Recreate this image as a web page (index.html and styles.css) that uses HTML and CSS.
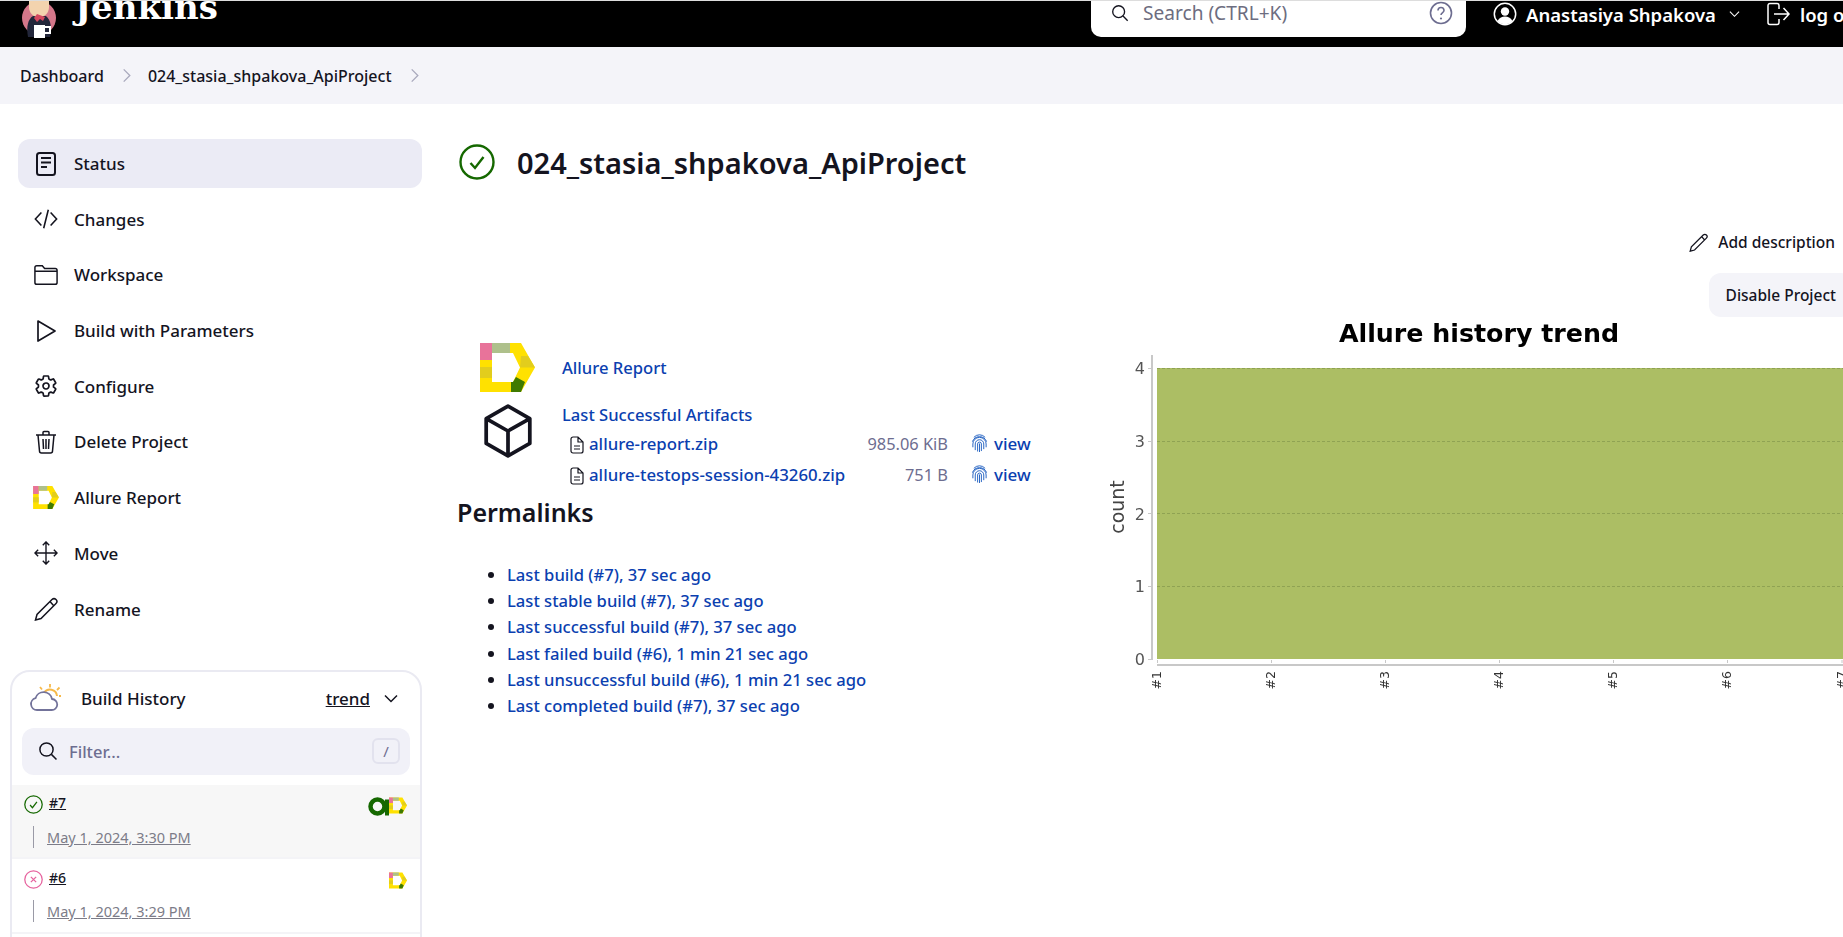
FILE: index.html
```html
<!DOCTYPE html>
<html lang="en">
<head>
    <meta charset="UTF-8">
    <meta name="viewport" content="width=device-width, initial-scale=1.0">
    <title>024_stasia_shpakova_ApiProject - Jenkins</title>
    <link rel="stylesheet" href="styles.css">
</head>

<body>
    <!-- shared icons -->
    <svg class="sprites" width="0" height="0">
        <symbol id="allure" viewBox="0 0 55 49">
            <path fill="#ffe100" d="M0 0H41L55 24.5L41 49H0ZM12 10V39H33L40 24.5L33 10Z" fill-rule="evenodd"/>
            <path fill="#e8739a" d="M0 0H12V17H0Z"/>
            <path fill="#aec08b" d="M12 0H30V10H12Z"/>
            <path fill="#e2cd1d" d="M0 24H12V35H0Z"/>
            <path fill="#e2cd1d" d="M41 13L48 13L55 24.5H40Z"/>
            <path fill="#3f7a00" d="M31 39H33L36 34L45 39L41 49H31Z"/>
        </symbol>
        <symbol id="check-circle" viewBox="0 0 36 36">
            <circle cx="18" cy="18" r="16.5" fill="none" stroke="currentColor" stroke-width="2.4"/>
            <path d="M11.5 19l4.5 5 8.5-11" fill="none" stroke="currentColor" stroke-width="2.4"/>
        </symbol>
        <symbol id="search" viewBox="0 0 20 20">
            <circle cx="8.5" cy="8.5" r="6.6" fill="none" stroke="currentColor" stroke-width="1.5"/>
            <path d="M13.4 13.4L18.5 18.5" stroke="currentColor" stroke-width="1.5"/>
        </symbol>
        <symbol id="doc" viewBox="0 0 14 18">
            <path d="M1 3a2 2 0 012-2h5l5 5v9a2 2 0 01-2 2H3a2 2 0 01-2-2Z M8 1v5h5 M4 10h6 M4 13h6" fill="none" stroke="currentColor" stroke-width="1.2"/>
        </symbol>
        <symbol id="fingerprint" viewBox="0 0 18 20">
            <g fill="none" stroke="#1f5fc0" stroke-width="1">
                <path d="M3 3.5a8 8 0 0112 0"/>
                <path d="M1.5 8a8 8 0 0115 0"/>
                <path d="M2 14V10.5a7 7 0 0114 0V14"/>
                <path d="M4.5 17V10.5a4.5 4.5 0 019 0V16"/>
                <path d="M7 18.5V10.5a2 2 0 014 0V18"/>
                <path d="M9 10v9"/>
            </g>
        </symbol>
    </svg>

    <div class="page">
        <header class="topbar">
            <a class="brand">
                <svg class="butler" viewBox="0 0 36 37">
                    <circle cx="17" cy="17" r="17" fill="#d5778a"/>
                    <path d="M6 36c-2-10 0-18 5-21h13c5 4 6 12 4 21Z" fill="#22263a"/>
                    <path d="M7 0h20v6c0 6-4 10-10 10S7 12 7 6Z" fill="#f3d3ae"/>
                    <path d="M15 13l8 3-2 4-3-2-3 3-3-4Z" fill="#d5485f"/>
                    <path d="M12 24h11v13H12Z" fill="#fff"/>
                    <path d="M23 26h5v6h-5" fill="none" stroke="#fff" stroke-width="2"/>
                </svg>
                <span class="brand-name">Jenkins</span>
            </a>
            <div class="search-box">
                <svg class="search-icon"><use href="#search"/></svg>
                <span class="search-text">Search (CTRL+K)</span>
                <svg class="help-icon" viewBox="0 0 24 24">
                    <circle cx="12" cy="12" r="10.5" fill="none" stroke="#6d6d90" stroke-width="1.6"/>
                    <path d="M9 9.5a3 3 0 116 0c0 2-3 2.2-3 4.5" fill="none" stroke="#6d6d90" stroke-width="1.6"/>
                    <circle cx="12" cy="17.5" r="1.1" fill="#6d6d90"/>
                </svg>
            </div>
            <div class="user">
                <svg class="user-icon" viewBox="0 0 24 24">
                    <circle cx="12" cy="12" r="10.7" fill="none" stroke="#fff" stroke-width="1.5"/>
                    <circle cx="12" cy="9.5" r="4.2" fill="#fff"/>
                    <path d="M4.5 19c2-3.5 4.5-4.5 7.5-4.5s5.5 1 7.500 4.5a10.5 10.5 0 01-15 0Z" fill="#fff"/>
                </svg>
                <span class="user-name">Anastasiya Shpakova</span>
                <svg class="user-caret" viewBox="0 0 12 8"><path d="M1 1.5l5 5 5-5" fill="none" stroke="#fff" stroke-width="1.2"/></svg>
            </div>
            <a class="logout">
                <svg class="logout-icon" viewBox="0 0 24 24">
                    <path d="M13 7V3.5a2 2 0 00-2-2H4a2 2 0 00-2 2v17a2 2 0 002 2h7a2 2 0 002-2V17" fill="none" stroke="#fff" stroke-width="1.5"/>
                    <path d="M8 12h15M17.5 6l5.5 6-5.5 6" fill="none" stroke="#fff" stroke-width="1.5"/>
                </svg>
                <span>log out</span>
            </a>
        </header>

        <nav class="breadcrumbs">
            <a>Dashboard</a>
            <svg class="crumb-sep" viewBox="0 0 10 16"><path d="M1.5 1.5L8 8l-6.5 6.5" fill="none" stroke="#a9a9bd" stroke-width="1.4"/></svg>
            <a>024_stasia_shpakova_ApiProject</a>
            <svg class="crumb-sep" viewBox="0 0 10 16"><path d="M1.5 1.5L8 8l-6.5 6.5" fill="none" stroke="#a9a9bd" stroke-width="1.4"/></svg>
        </nav>

        <div class="layout">
            <aside class="sidebar">
                <ul class="tasks">
                    <li class="task active">
                        <svg class="task-icon" viewBox="0 0 24 24"><rect x="3" y="1" width="18" height="22" rx="2.5" fill="none" stroke="currentColor" stroke-width="2"/><path d="M7 6h10M7 10.5h10M7 15h6" stroke="currentColor" stroke-width="2"/></svg>
                        Status
                    </li>
                    <li class="task">
                        <svg class="task-icon" viewBox="0 0 26 24"><path d="M8 5L1.5 12 8 19M18 5l6.5 7-6.5 7M15.5 2l-5 20" fill="none" stroke="currentColor" stroke-width="1.7"/></svg>
                        Changes
                    </li>
                    <li class="task">
                        <svg class="task-icon" viewBox="0 0 26 24"><path d="M1 6V4a2 2 0 012-2h6l2.5 3H23a2 2 0 012 2v13a2 2 0 01-2 2H3a2 2 0 01-2-2ZM1 8h24" fill="none" stroke="currentColor" stroke-width="1.6"/></svg>
                        Workspace
                    </li>
                    <li class="task">
                        <svg class="task-icon" viewBox="0 0 24 24"><path d="M4 2l17 10L4 22Z" fill="none" stroke="currentColor" stroke-width="1.7" stroke-linejoin="round"/></svg>
                        Build with Parameters
                    </li>
                    <li class="task">
                        <svg class="task-icon" viewBox="0 0 512 512"><path d="M262.29 192.31a64 64 0 1057.4 57.4 64.13 64.13 0 00-57.4-57.4zM416.39 256a154.34 154.34 0 01-1.53 20.79l45.21 35.46a10.81 10.81 0 012.45 13.75l-42.77 74a10.81 10.81 0 01-13.14 4.59l-44.9-18.08a16.11 16.11 0 00-15.17 1.75A164.48 164.48 0 01325 400.8a15.94 15.94 0 00-8.82 12.14l-6.73 47.89a11.08 11.08 0 01-10.68 9.17h-85.54a11.11 11.11 0 01-10.69-8.87l-6.72-47.82a16.07 16.07 0 00-9-12.22 155.3 155.3 0 01-21.46-12.57 16 16 0 00-15.11-1.71l-44.89 18.07a10.81 10.81 0 01-13.14-4.58l-42.77-74a10.8 10.8 0 012.45-13.75l38.21-30a16.05 16.05 0 006-14.08c-.36-4.17-.58-8.33-.58-12.5s.21-8.27.58-12.35a16 16 0 00-6.07-13.94l-38.19-30A10.81 10.81 0 0149.48 186l42.77-74a10.81 10.81 0 0113.14-4.59l44.9 18.08a16.11 16.11 0 0015.17-1.75A164.48 164.48 0 01187 111.2a15.94 15.94 0 008.82-12.14l6.73-47.89A11.08 11.08 0 01213.23 42h85.54a11.11 11.11 0 0110.69 8.87l6.72 47.82a16.07 16.07 0 009 12.22 155.3 155.3 0 0121.46 12.57 16 16 0 0015.11 1.71l44.89-18.07a10.81 10.81 0 0113.14 4.58l42.77 74a10.8 10.8 0 01-2.45 13.75l-38.21 30a16.05 16.05 0 00-6.05 14.08c.33 4.14.55 8.3.55 12.47z" fill="none" stroke="currentColor" stroke-width="36"/></svg>
                        Configure
                    </li>
                    <li class="task">
                        <svg class="task-icon" viewBox="0 0 24 24"><path d="M2 5h20M4 5l1.5 16a2 2 0 002 2h9a2 2 0 002-2L20 5M9 5V2.5a1 1 0 011-1h4a1 1 0 011 1V5M9 9l.5 10M12 9v10M15 9l-.5 10" fill="none" stroke="currentColor" stroke-width="1.5"/></svg>
                        Delete Project
                    </li>
                    <li class="task">
                        <svg class="task-icon allure-task"><use href="#allure"/></svg>
                        Allure Report
                    </li>
                    <li class="task">
                        <svg class="task-icon" viewBox="0 0 26 26"><path d="M13 1v24M1 13h24M9.5 4.5L13 1l3.5 3.5M9.5 21.5L13 25l3.5-3.5M4.5 9.5L1 13l3.5 3.5M21.5 9.5L25 13l-3.5 3.5" fill="none" stroke="currentColor" stroke-width="1.5"/></svg>
                        Move
                    </li>
                    <li class="task">
                        <svg class="task-icon" viewBox="0 0 24 24"><path d="M18 2.5a2.8 2.8 0 014 4L7 21.5 1.5 23 3 17.5ZM16 4.5l3.5 4" fill="none" stroke="currentColor" stroke-width="1.5"/></svg>
                        Rename
                    </li>
                </ul>

                <section class="history">
                    <div class="history-head">
                        <svg class="weather" viewBox="0 0 32 28">
                            <path d="M21 3.5V0M28 6l2.5-2.5M30 12h3M13 5.5L11 3" stroke="#f6b94a" stroke-width="1.8"/>
                            <path d="M15 9a7 7 0 0113 3" fill="none" stroke="#f6b94a" stroke-width="2"/>
                            <path d="M8 26a6 6 0 01-1.5-11.8A8.5 8.5 0 0123 15a5.5 5.5 0 01-.5 11Z" fill="#fff" stroke="#73739a" stroke-width="1.8"/>
                        </svg>
                        <span class="history-title">Build History</span>
                        <a class="trend">trend</a>
                        <svg class="trend-caret" viewBox="0 0 14 9"><path d="M1 1.5l6 6 6-6" fill="none" stroke="#14141f" stroke-width="1.5"/></svg>
                    </div>
                    <div class="filter">
                        <svg class="filter-icon"><use href="#search"/></svg>
                        <span class="filter-text">Filter...</span>
                        <kbd class="filter-key">/</kbd>
                    </div>
                    <div class="build current">
                        <div class="build-top">
                            <svg class="build-status ok"><use href="#check-circle"/></svg>
                            <a class="build-no">#7</a>
                            <span class="build-badges">
                                <svg class="badge-testops" viewBox="0 0 21 19"><circle cx="9.5" cy="9.5" r="7" fill="none" stroke="#156800" stroke-width="4.5"/><path d="M19 2.5v16" stroke="#156800" stroke-width="4"/></svg>
                                <svg class="badge-allure"><use href="#allure"/></svg>
                            </span>
                        </div>
                        <div class="build-time"><a>May 1, 2024, 3:30 PM</a></div>
                    </div>
                    <div class="build">
                        <div class="build-top">
                            <svg class="build-status fail" viewBox="0 0 36 36"><circle cx="18" cy="18" r="16.5" fill="none" stroke="currentColor" stroke-width="2.4"/><path d="M13 13l10 10M23 13L13 23" stroke="currentColor" stroke-width="2.4"/></svg>
                            <a class="build-no">#6</a>
                            <span class="build-badges">
                                <svg class="badge-allure"><use href="#allure"/></svg>
                            </span>
                        </div>
                        <div class="build-time"><a>May 1, 2024, 3:29 PM</a></div>
                    </div>
                    <div class="build"></div>
                </section>
            </aside>

            <main class="content">
                <div class="job-title">
                    <svg class="job-status"><use href="#check-circle"/></svg>
                    <h1>024_stasia_shpakova_ApiProject</h1>
                </div>

                <div class="actions">
                    <a class="add-description">
                        <svg class="add-icon" viewBox="0 0 24 24"><path d="M18 2.5a2.8 2.8 0 014 4L7 21.5 1.5 23 3 17.5ZM16 4.5l3.5 4" fill="none" stroke="currentColor" stroke-width="1.6"/></svg>
                        Add description
                    </a>
                    <button class="disable-btn" type="button">Disable Project</button>
                </div>

                <div class="columns">
                    <div class="links">
                        <div class="link-row report-row">
                            <svg class="big-allure"><use href="#allure"/></svg>
                            <a class="link">Allure Report</a>
                        </div>
                        <div class="link-row artifacts-row">
                            <svg class="box-icon" viewBox="0 0 50 52"><path d="M25 2l21 12v24L25 50 4 38V14ZM4 14l21 12 21-12M25 26v24" fill="none" stroke="#14141f" stroke-width="3.6" stroke-linejoin="round"/></svg>
                            <div class="artifacts">
                                <a class="link">Last Successful Artifacts</a>
                                <div class="file-row">
                                    <svg class="doc-icon"><use href="#doc"/></svg>
                                    <a class="link file-name">allure-report.zip</a>
                                    <span class="file-size">985.06 KiB</span>
                                    <svg class="view-icon"><use href="#fingerprint"/></svg>
                                    <a class="link view-link">view</a>
                                </div>
                                <div class="file-row">
                                    <svg class="doc-icon"><use href="#doc"/></svg>
                                    <a class="link file-name">allure-testops-session-43260.zip</a>
                                    <span class="file-size">751 B</span>
                                    <svg class="view-icon"><use href="#fingerprint"/></svg>
                                    <a class="link view-link">view</a>
                                </div>
                            </div>
                        </div>

                        <h2>Permalinks</h2>
                        <ul class="permalinks">
                            <li><a class="link">Last build (#7), 37 sec ago</a></li>
                            <li><a class="link">Last stable build (#7), 37 sec ago</a></li>
                            <li><a class="link">Last successful build (#7), 37 sec ago</a></li>
                            <li><a class="link">Last failed build (#6), 1 min 21 sec ago</a></li>
                            <li><a class="link">Last unsuccessful build (#6), 1 min 21 sec ago</a></li>
                            <li><a class="link">Last completed build (#7), 37 sec ago</a></li>
                        </ul>
                    </div>

                    <svg class="trend-chart" width="760" height="400" viewBox="0 0 760 400">
                        <text class="chart-title" x="379" y="22" text-anchor="middle">Allure history trend</text>
                        <rect x="57" y="48" width="686" height="291" fill="#acbe64"/>
                        <g stroke="#8fa253" stroke-dasharray="3 2">
                            <line x1="57" x2="743" y1="48.5" y2="48.5"/>
                            <line x1="57" x2="743" y1="121.5" y2="121.5"/>
                            <line x1="57" x2="743" y1="193.5" y2="193.5"/>
                            <line x1="57" x2="743" y1="266.5" y2="266.5"/>
                        </g>
                        <g stroke="#c8c8c8" stroke-width="2">
                            <line x1="52" x2="52" y1="35" y2="340"/>
                            <line x1="57" x2="743" y1="345" y2="345"/>
                        </g>
                        <g stroke="#c8c8c8">
                            <path d="M48 48.5h3M48 121.5h3M48 193.5h3M48 266.5h3M48 339.5h3"/>
                            <path d="M57.5 343v-3M171.5 343v-3M285.5 343v-3M399.5 343v-3M513.5 343v-3M627.5 343v-3M742 343v-3"/>
                        </g>
                        <g class="chart-tick" text-anchor="end">
                            <text x="45" y="54">4</text>
                            <text x="45" y="127">3</text>
                            <text x="45" y="200">2</text>
                            <text x="45" y="272">1</text>
                            <text x="45" y="345">0</text>
                        </g>
                        <text class="chart-axis" transform="translate(24 187) rotate(-90)" text-anchor="middle">count</text>
                        <g class="chart-build" text-anchor="end">
                            <text transform="translate(61 351) rotate(-90)">#1</text>
                            <text transform="translate(175 351) rotate(-90)">#2</text>
                            <text transform="translate(289 351) rotate(-90)">#3</text>
                            <text transform="translate(403 351) rotate(-90)">#4</text>
                            <text transform="translate(517 351) rotate(-90)">#5</text>
                            <text transform="translate(631 351) rotate(-90)">#6</text>
                            <text transform="translate(746 351) rotate(-90)">#7</text>
                        </g>
                    </svg>
                </div>
            </main>
        </div>
    </div>
</body>
</html>
```

FILE: styles.css
```css
* {
    margin: 0;
    padding: 0;
    box-sizing: border-box;
}

html,
body {
    height: 100%;
    overflow: hidden;
    background-color: #fff;
}

body {
    font-family: 'Noto Sans', 'Open Sans', sans-serif;
    font-size: 16px;
    color: #14141f;
}

.sprites {
    display: block;
    height: 0;
}

.page {
    width: 1862px;
}

/* top bar, cut off by the page scroll */
.topbar {
    display: flex;
    height: 47px;
    background-color: #000;
    border-top: 1px solid #ddd;
    color: #fff;
    overflow: hidden;
}

.brand {
    display: flex;
    width: 1091px;
    flex-shrink: 0;
    padding-left: 22px;
}

.butler {
    width: 36px;
    height: 37px;
}

.brand-name {
    margin-left: 17px;
    margin-top: -15px;
    font-family: 'DejaVu Serif', serif;
    font-size: 34px;
    line-height: 42px;
    font-weight: bold;
}

.search-box {
    display: flex;
    align-items: center;
    width: 375px;
    height: 36px;
    flex-shrink: 0;
    padding: 0 13px 12px 20px;
    background-color: #fff;
    border-radius: 0 0 10px 10px;
    color: #14141f;
}

.search-icon {
    width: 18px;
    height: 18px;
}

.search-text {
    margin-left: 14px;
    font-size: 19.1px;
    color: #6d6d80;
}

.help-icon {
    width: 24px;
    height: 24px;
    margin-left: auto;
}

.user {
    display: flex;
    align-items: center;
    flex-shrink: 0;
    height: 26px;
    margin-left: 27px;
}

.user-icon {
    width: 24px;
    height: 24px;
}

.user-name {
    margin-left: 9px;
    font-size: 18.5px;
    font-weight: 600;
    white-space: nowrap;
}

.user-caret {
    width: 11px;
    height: 8px;
    margin-left: 13px;
}

.logout {
    display: flex;
    align-items: center;
    flex-shrink: 0;
    height: 26px;
    margin-left: 26px;
    font-size: 18.5px;
    font-weight: 600;
    white-space: nowrap;
}

.logout-icon {
    width: 24px;
    height: 24px;
    margin-right: 10px;
}

/* breadcrumb */
.breadcrumbs {
    display: flex;
    align-items: center;
    height: 57px;
    padding-left: 20px;
    background-color: #f4f4f9;
    font-size: 16px;
    font-weight: 500;
}

.crumb-sep {
    width: 10px;
    height: 15px;
    margin: 0 16px 0 18px;
}

.layout {
    display: grid;
    grid-template-columns: 457px 1405px;
}

/* side panel */
.sidebar {
    padding: 35px 0 0 10px;
}

.tasks {
    display: flex;
    flex-direction: column;
    gap: 6.7px;
    margin-left: 8px;
    width: 404px;
    list-style: none;
}

.task {
    display: flex;
    align-items: center;
    height: 49px;
    padding-left: 16px;
    border-radius: 12px;
    font-size: 17px;
    font-weight: 500;
}

.task.active {
    background-color: #ebebf5;
}

.task-icon {
    width: 24px;
    height: 24px;
    margin-right: 16px;
    color: #14141f;
}

.allure-task {
    width: 26px;
    height: 23px;
    margin-left: -1px;
    margin-right: 15px;
}

.history {
    width: 412px;
    height: 330px;
    margin-top: 36px;
    border: 2px solid #eaeaf2;
    border-radius: 20px;
    overflow: hidden;
}

.history-head {
    display: flex;
    align-items: center;
    height: 53px;
    padding: 0 22px 0 17px;
}

.weather {
    width: 32px;
    height: 28px;
}

.history-title {
    margin-left: 20px;
    font-size: 17px;
    font-weight: 500;
}

.trend {
    margin-left: auto;
    font-size: 17px;
    font-weight: 500;
    text-decoration: underline;
}

.trend-caret {
    width: 14px;
    height: 9px;
    margin-left: 14px;
}

.filter {
    display: flex;
    align-items: center;
    height: 47px;
    margin: 3px 10px 0;
    padding: 0 10px 0 16px;
    background-color: #f1f1f8;
    border-radius: 12px;
}

.filter-icon {
    width: 20px;
    height: 20px;
    color: #14141f;
}

.filter-text {
    margin-left: 11px;
    font-size: 16.5px;
    font-weight: 500;
    color: #6d6d90;
}

.filter-key {
    width: 28px;
    height: 26px;
    margin-left: auto;
    border: 2px solid #e2e2ee;
    border-radius: 6px;
    font-family: 'Noto Sans', sans-serif;
    font-size: 15px;
    line-height: 22px;
    text-align: center;
    color: #6d6d90;
}

.build {
    height: 74.5px;
    padding: 7px 13px 0 12px;
    border-bottom: 2px solid #f4f4f7;
}

.build.current {
    margin-top: 10px;
    background-color: #f7f7f7;
}

.build-top {
    display: flex;
    align-items: center;
    height: 24px;
}

.build-status {
    width: 19px;
    height: 19px;
    margin-top: 2px;
}

.build-status.ok {
    color: #156800;
}

.build-status.fail {
    color: #e6639e;
}

.build-no {
    margin-left: 6px;
    margin-top: -2px;
    font-size: 14px;
    font-weight: 500;
    text-decoration: underline;
}

.build-badges {
    display: flex;
    margin-left: auto;
    margin-top: 5px;
}

.badge-testops {
    width: 21px;
    height: 19px;
}

.badge-allure {
    width: 18px;
    height: 17px;
}

.build-time {
    height: 22px;
    margin: 10px 0 0 9px;
    padding-left: 13px;
    border-left: 1px solid #9a9aa6;
    font-size: 14.5px;
    line-height: 22px;
    color: #7c7c88;
}

.build-time a {
    text-decoration: underline;
}

/* job page */
.content {
    padding: 35px 9px 0 0;
}

.job-title {
    display: flex;
    align-items: center;
    gap: 22px;
    height: 46px;
    padding-left: 2px;
}

.job-status {
    width: 36px;
    height: 36px;
    color: #156800;
}

h1 {
    font-size: 29px;
    font-weight: 600;
}

.actions {
    display: flex;
    flex-direction: column;
    align-items: flex-end;
    margin-top: 45px;
}

.add-description {
    display: flex;
    align-items: center;
    gap: 10px;
    height: 24px;
    padding-right: 18px;
    font-size: 15.5px;
    font-weight: 500;
}

.add-icon {
    width: 19px;
    height: 19px;
}

.disable-btn {
    height: 44px;
    margin-top: 19px;
    padding: 0 17px;
    background-color: #f4f4f9;
    border: none;
    border-radius: 12px;
    font-family: inherit;
    font-size: 15.5px;
    font-weight: 500;
    color: #14141f;
}

.columns {
    display: flex;
    margin-top: 3px;
}

.links {
    width: 643px;
    flex-shrink: 0;
    padding-top: 23px;
}

.link {
    color: #0b3fb0;
    font-weight: 500;
    white-space: nowrap;
}

.link-row {
    display: flex;
    font-size: 16.6px;
}

.report-row {
    align-items: center;
    height: 49px;
}

.big-allure {
    width: 55px;
    height: 49px;
    margin-left: 23px;
    margin-right: 27px;
}

.artifacts-row {
    margin-top: 10px;
}

.box-icon {
    width: 52px;
    height: 54px;
    margin: 2px 28px 0 25px;
    flex-shrink: 0;
}

.artifacts {
    line-height: 26px;
}

.file-row {
    display: flex;
    align-items: center;
    height: 31px;
    padding-left: 8px;
}

.doc-icon {
    width: 14px;
    height: 18px;
    margin-top: 3px;
    margin-right: 5px;
    color: #14141f;
}

.file-name {
    width: 261px;
    font-size: 16.8px;
}

.file-size {
    width: 98px;
    font-size: 16.4px;
    text-align: right;
    color: #6d6d90;
    white-space: nowrap;
}

.view-icon {
    width: 17px;
    height: 19px;
    margin: 0 6px 0 23px;
}

.view-link {
    font-size: 17px;
}

h2 {
    margin-top: 6px;
    font-size: 25px;
    line-height: 32px;
    font-weight: 600;
}

.permalinks {
    margin-top: 34px;
    padding-left: 50px;
    line-height: 26.2px;
    font-size: 16.6px;
}

/* chart image */
.trend-chart {
    flex-shrink: 0;
    filter: blur(.4px);
}

.chart-title {
    font-family: 'DejaVu Sans', sans-serif;
    font-size: 25.3px;
    font-weight: bold;
    fill: #000;
}

.chart-tick {
    font-family: 'DejaVu Sans', sans-serif;
    font-size: 16px;
    fill: #555;
}

.chart-axis {
    font-family: 'DejaVu Sans', sans-serif;
    font-size: 19px;
    fill: #444;
}

.chart-build {
    font-family: 'DejaVu Sans', sans-serif;
    font-size: 12.5px;
    fill: #333;
}
```
